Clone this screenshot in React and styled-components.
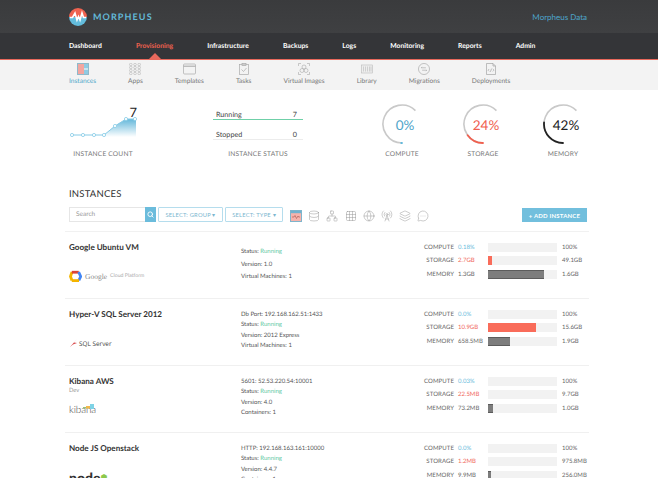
import React from "react";
import styled, { createGlobalStyle } from "styled-components";
import {
  Database,
  Network,
  Grid3x3,
  Globe,
  RadioTower,
  Layers,
  MessageCircleMore,
  Search
} from "lucide-react";

const GlobalStyle = createGlobalStyle`
  html, body {
    margin: 0;
    height: 478px;
    overflow: hidden;
    background: #fff;
    font-family: "Lato", "Open Sans", sans-serif;
    color: #4a4a4a;
    text-rendering: geometricPrecision;
  }
`;

const Brand = styled.div`
  height: 33px;
  padding: 0 71px 0 69px;
  display: flex;
  align-items: center;
  justify-content: space-between;
  background: linear-gradient(#3a3b3d, #3f4042);
`;

const LogoWrap = styled.div`
  display: flex;
  align-items: center;
  gap: 6px;
`;

const LogoText = styled.span`
  font-size: 9px;
  font-weight: 700;
  letter-spacing: 1.1px;
  color: #63b9d8;
`;

const Account = styled.span`
  font-size: 8px;
  color: #4ea6cc;
`;

const MainNav = styled.nav`
  height: 26px;
  padding-left: 69px;
  display: flex;
  align-items: center;
  gap: 34px;
  background: #343538;
  border-bottom: 1px solid #e8695c;
`;

const NavItem = styled.a`
  position: relative;
  font-size: 6.8px;
  font-weight: 700;
  color: ${props => (props.$active ? "#f0614f" : "#fff")};
  &::after {
    content: "";
    display: ${props => (props.$active ? "block" : "none")};
    position: absolute;
    left: 50%;
    bottom: -9px;
    margin-left: -6px;
    border-left: 6px solid transparent;
    border-right: 6px solid transparent;
    border-bottom: 6px solid #e8695c;
  }
`;

const SubNav = styled.nav`
  height: 30px;
  padding-left: 69px;
  display: flex;
  gap: 32px;
  background: #f3f3f3;
`;

const SubItem = styled.a`
  display: flex;
  flex-direction: column;
  align-items: center;
  padding-top: 3px;
  font-size: 6.6px;
  line-height: 9px;
  color: ${props => (props.$active ? "#4da7c9" : "#777")};
  svg {
    display: block;
    height: 12px;
    margin-bottom: 2px;
  }
`;

const Stats = styled.section`
  display: grid;
  grid-template-columns: 144px 169px 81px 80px 81px;
  padding: 14px 0 0 69px;
  height: 86px;
  box-sizing: border-box;
`;

const Stat = styled.div`
  display: flex;
  flex-direction: column;
  align-items: center;
  width: ${props => props.$width}px;
`;

const StatBody = styled.div`
  position: relative;
  height: 42px;
  width: 100%;
`;

const StatLabel = styled.span`
  margin-top: 4px;
  font-size: 6.6px;
  line-height: 9px;
  letter-spacing: 0.2px;
  color: #777;
  white-space: nowrap;
`;

const CountValue = styled.span`
  position: absolute;
  right: 0;
  top: 2px;
  font-size: 13px;
  line-height: 13px;
  color: #222;
`;

const StatusRow = styled.div`
  height: 9px;
  margin-top: ${props => props.$top}px;
  padding: 0 6px 0 3px;
  display: flex;
  align-items: center;
  justify-content: space-between;
  font-size: 7.2px;
  color: #444;
  border-bottom: 1px solid ${props => props.$line};
`;

const GaugeValue = styled.span`
  position: absolute;
  left: 6px;
  right: 0;
  top: 13px;
  text-align: center;
  font-size: 13.5px;
  line-height: 16px;
  white-space: nowrap;
  color: ${props => props.$color};
`;

const Content = styled.main`
  padding: 0 71px 0 69px;
`;

const Heading = styled.h2`
  margin: 12px 0 0;
  height: 19px;
  font-size: 9.5px;
  line-height: 14px;
  font-weight: 400;
  letter-spacing: 0.2px;
  color: #333;
`;

const Toolbar = styled.div`
  height: 24px;
  display: flex;
  align-items: flex-start;
  border-bottom: 1px solid #f1f1f1;
  margin: 0 -2px 0 -4px;
  padding: 0 2px 0 4px;
`;

const SearchBox = styled.div`
  width: 76px;
  height: 15px;
  box-sizing: border-box;
  padding-left: 6px;
  display: flex;
  align-items: center;
  font-size: 6.5px;
  color: #999;
  border: 1px solid #e6e6e6;
  border-right: 0;
`;

const SearchButton = styled.button`
  width: 11px;
  height: 15px;
  padding: 0;
  border: 0;
  display: flex;
  align-items: center;
  justify-content: center;
  background: #6bbcdc;
  color: #fff;
`;

const SelectButton = styled.button`
  width: ${props => props.$width}px;
  height: 15px;
  margin-left: ${props => props.$gap}px;
  padding: 0;
  font: inherit;
  font-size: 5.8px;
  letter-spacing: 0.2px;
  color: #7bb6cf;
  background: #fff;
  border: 1px solid #b5dded;
  border-radius: 1px;
`;

const Icons = styled.div`
  margin: 3px 0 0 7px;
  display: flex;
  gap: 6.2px;
  color: #999;
`;

const AddButton = styled.button`
  margin-left: auto;
  margin-top: 1px;
  width: 65px;
  height: 14px;
  padding: 0;
  border: 0;
  font: inherit;
  font-size: 6px;
  font-weight: 700;
  letter-spacing: 0.2px;
  color: #fff;
  background: #72bfdd;
`;

const Row = styled.article`
  height: 55px;
  display: flex;
  margin: 0 -2px 0 -4px;
  padding: 11px 2px 0 4px;
  border-bottom: 1px solid #f0f0f0;
`;

const Identity = styled.div`
  flex: none;
  width: 172px;
`;

const Title = styled.h3`
  margin: 0;
  font-size: 8.1px;
  line-height: 9px;
  font-weight: 700;
  color: #333;
`;

const Sub = styled.div`
  height: 9px;
  font-size: 5.8px;
  line-height: 9px;
  color: #999;
`;

const LogoSlot = styled.div`
  position: relative;
  height: 20px;
  margin-top: 5px;
  display: flex;
  align-items: center;
  gap: ${props => props.$gap || 0}px;
  color: #666;
`;

const Details = styled.div`
  flex: none;
  width: 165px;
  padding-top: ${props => (props.$roomy ? "3px" : "0")};
  font-size: 6px;
  line-height: ${props => (props.$roomy ? "12.6px" : "10.3px")};
  color: #555;
`;

const Running = styled.span`
  color: #5fc8a2;
`;

const Metrics = styled.div`
  flex: none;
  width: 181px;
  display: flex;
  flex-direction: column;
  gap: 4.4px;
`;

const MetricRow = styled.div`
  display: flex;
  align-items: center;
  height: 9px;
  font-size: 6px;
  color: #666;
`;

const MetricName = styled.span`
  width: 48px;
  text-align: right;
  letter-spacing: 0.1px;
  color: #666;
`;

const MetricUsed = styled.span`
  width: 30px;
  margin-left: 4px;
  color: ${props => props.$color};
`;

const Bar = styled.div`
  width: 69px;
  height: 9px;
  background: #f2f2f2;
`;

const BarFill = styled.div`
  height: 100%;
  box-sizing: border-box;
  background: ${props => props.$color};
  border-top: ${props => (props.$dark ? "1px solid #5c5c5c" : "0")};
  border-bottom: ${props => (props.$dark ? "1px solid #5c5c5c" : "0")};
`;

const MetricTotal = styled.span`
  margin-left: 5px;
`;

const GoogleText = styled.span`
  font-family: "Liberation Serif", serif;
  font-size: 7.5px;
  color: #8a8a8a;
`;

const GoogleSmall = styled.span`
  font-size: 5.2px;
  color: #aaa;
`;

const SqlText = styled.span`
  font-family: "Open Sans", sans-serif;
  font-size: 6.4px;
  color: #444;
`;

const KibanaText = styled.span`
  font-size: 10px;
  font-weight: 300;
  letter-spacing: -0.1px;
  color: #444;
`;

const KibanaBlocks = styled.svg`
  position: absolute;
  left: 14px;
  top: 4px;
`;

const NodeText = styled.span`
  font-size: 14px;
  font-weight: 900;
  color: #333;
`;

const NodeDot = styled.span`
  font-size: 8px;
  color: #8cc84b;
`;

const MorpheusMark = () => (
  <svg width="18" height="18" viewBox="0 0 18 18">
    <path d="M0 9a9 9 0 0 1 18 0z" fill="#ef6350" />
    <path d="M0 9a9 9 0 0 0 18 0z" fill="#63bcdc" />
    <path
      d="M1 9.5h2.5L6 5l2 7 1.5-3.5L11 12l2-7 1.5 4.5H17"
      fill="none"
      stroke="#fff"
      strokeWidth="1.6"
    />
  </svg>
);

const InstancesIcon = () => (
  <svg width="12" height="12" viewBox="0 0 12 12">
    <rect x="0.5" y="0.5" width="11" height="11" fill="#fff" stroke="#8fb9ca" />
    <rect x="1" y="1" width="6" height="10" fill="#f3a6a0" />
    <rect x="7" y="1" width="4" height="4.5" fill="#8fcbe3" />
    <rect x="7" y="6.5" width="4" height="4.5" fill="#8fcbe3" />
  </svg>
);

const AppsIcon = () => (
  <svg width="12" height="12" viewBox="0 0 12 12" fill="none" stroke="#aaa" strokeWidth="0.5">
    {[1.5, 4.5, 7.5, 10.5].map(y =>
      [1.8, 6, 10.2].map(x => <circle key={`${x}-${y}`} cx={x} cy={y} r="1.3" />)
    )}
  </svg>
);

const TemplatesIcon = () => (
  <svg width="13" height="12" viewBox="0 0 13 12" fill="none" stroke="#aaa" strokeWidth="0.7">
    <rect x="0.5" y="1" width="12" height="10" rx="1" />
    <path d="M0.5 3.2h12" strokeWidth="1.1" />
  </svg>
);

const TasksIcon = () => (
  <svg width="10" height="12" viewBox="0 0 10 12" fill="none" stroke="#aaa" strokeWidth="0.7">
    <rect x="0.5" y="1.5" width="9" height="10" />
    <rect x="3" y="0.5" width="4" height="2" fill="#ccc" />
    <path d="M2.5 6.5l2 2 3-3.5" />
  </svg>
);

const VirtualIcon = () => (
  <svg width="12" height="12" viewBox="0 0 12 12" fill="none" stroke="#aaa" strokeWidth="0.6">
    <path d="M0.5 3V.5H3M9 .5h2.5V3M.5 9v2.5H3M9 11.5h2.5V9" />
    <circle cx="6" cy="4" r="2" />
    <circle cx="4" cy="7.5" r="2" />
    <circle cx="8" cy="7.5" r="2" />
  </svg>
);

const LibraryIcon = () => (
  <svg width="12" height="12" viewBox="0 0 12 12" fill="none" stroke="#bbb" strokeWidth="0.6">
    <rect x="0.5" y="2" width="11" height="8" fill="#eee" />
    <path d="M2.5 3.5v5M4.5 3.5v5M6.5 3.5v5M8.5 3.5v5M10 3.5v5" />
  </svg>
);

const MigrationsIcon = () => (
  <svg width="12" height="12" viewBox="0 0 13 13" fill="none" stroke="#999" strokeWidth="0.6">
    <circle cx="6.5" cy="6.5" r="6" />
    <path d="M3.5 5.2h5M3.5 5.2l1-1M9.5 7.8h-5M9.5 7.8l-1 1" />
  </svg>
);

const DeployIcon = () => (
  <svg width="10" height="12" viewBox="0 0 10 12" fill="none" stroke="#999" strokeWidth="0.6">
    <path d="M.5.5H7L9.5 3v8.5h-9zM7 .5V3h2.5" />
    <path d="M3.2 6L2 7.2l1.2 1.2M6.8 6L8 7.2 6.8 8.4M5.6 5.6L4.4 8.8" />
  </svg>
);

const Sparkline = () => (
  <svg width="68" height="42" viewBox="0 0 68 42">
    <defs>
      <linearGradient id="spark" x1="0" y1="0" x2="0" y2="1">
        <stop offset="0" stopColor="#63b7da" />
        <stop offset="1" stopColor="#fff" />
      </linearGradient>
    </defs>
    <path d="M35 31L46 22 57 15 67 15V33H35z" fill="url(#spark)" />
    <polyline
      points="3,31 14,31 25,31 35,31 46,22 57,15 67,15"
      fill="none"
      stroke="#86cbe6"
      strokeWidth="1"
    />
    {[[3, 31], [14, 31], [25, 31], [35, 31], [46, 22], [57, 15], [66, 15]].map(([x, y]) => (
      <circle key={x} cx={x} cy={y} r="1.6" fill="#fff" stroke="#86cbe6" strokeWidth="0.8" />
    ))}
  </svg>
);

// 225deg track running from the bottom clockwise to the upper right
const polar = (deg, r = 19) => {
  const a = ((deg - 90) * Math.PI) / 180;
  return [20 + r * Math.cos(a), 20 + r * Math.sin(a)];
};

const arc = (from, to) => {
  const [x1, y1] = polar(from);
  const [x2, y2] = polar(to);
  return `M${x1} ${y1}A19 19 0 ${to - from > 180 ? 1 : 0} 1 ${x2} ${y2}`;
};

const Gauge = ({ value, color }) => (
  <svg width="40" height="40" viewBox="0 0 40 40" fill="none">
    <path d={arc(180, 405)} stroke="#c9c9c9" strokeWidth="1.6" />
    <path
      d={arc(180, 180 + Math.max(value, 1) * 2.25)}
      stroke={color}
      strokeWidth="1.8"
      strokeLinecap="round"
    />
  </svg>
);

const CalendarIcon = () => (
  <svg width="12" height="12" viewBox="0 0 12 12">
    <rect x="0.5" y="0.5" width="11" height="11" fill="#f6b3ac" stroke="#7fb4cb" />
    <rect x="1" y="1" width="10" height="2.2" fill="#6fb2cf" />
    <path d="M2 7h2l1-1.5L6.5 8.5 8 6l.7 1H10" fill="none" stroke="#a5554f" strokeWidth="0.6" />
  </svg>
);

const GoogleLogo = () => (
  <LogoSlot $gap={3}>
    <svg width="13" height="13" viewBox="0 0 14 14" fill="none" strokeWidth="3">
      <path d="M3.2 2.2L1.6 7l1.6 4.2" stroke="#f4b400" />
      <path d="M3 2.4h7.5" stroke="#db4437" />
      <path d="M10.4 2.2L12.6 7l-2 4.2" stroke="#4285f4" />
      <path d="M3 11.4h7.8" stroke="#f4b400" />
    </svg>
    <GoogleText>Google</GoogleText>
    <GoogleSmall>Cloud Platform</GoogleSmall>
  </LogoSlot>
);

const SqlLogo = () => (
  <LogoSlot $gap={1}>
    <svg width="9" height="11" viewBox="0 0 9 11">
      <path d="M1 9L8 1 5 4.5l3 .6-4 1.4z" fill="#d8474a" />
    </svg>
    <SqlText>SQL Server</SqlText>
  </LogoSlot>
);

const KibanaLogo = () => (
  <LogoSlot>
    <KibanaText>kibana</KibanaText>
    <KibanaBlocks width="12" height="7" viewBox="0 0 12 7">
      <rect x="0" y="3" width="4" height="1.5" fill="#9ac27a" />
      <rect x="3" y="2" width="4" height="2.5" fill="#f2b84b" />
      <rect x="7" y="0" width="4" height="5" fill="#7fd3e6" />
    </KibanaBlocks>
  </LogoSlot>
);

const NodeLogo = () => (
  <LogoSlot>
    <NodeText>node</NodeText>
    <NodeDot>⬢</NodeDot>
  </LogoSlot>
);

const navItems = ["Dashboard", "Provisioning", "Infrastructure", "Backups", "Logs", "Monitoring", "Reports", "Admin"];

const subItems = [
  ["Instances", InstancesIcon],
  ["Apps", AppsIcon],
  ["Templates", TemplatesIcon],
  ["Tasks", TasksIcon],
  ["Virtual Images", VirtualIcon],
  ["Library", LibraryIcon],
  ["Migrations", MigrationsIcon],
  ["Deployments", DeployIcon]
];

const instances = [
  {
    name: "Google Ubuntu VM",
    logo: GoogleLogo,
    roomy: true,
    details: [["Status"], "Version: 1.0", "Virtual Machines: 1"],
    compute: "0.18%",
    storage: ["2.7GB", "49.1GB", 5.5],
    memory: ["1.3GB", "1.6GB", 81]
  },
  {
    name: "Hyper-V SQL Server 2012",
    logo: SqlLogo,
    details: ["Db Port: 192.168.162.51:1433", ["Status"], "Version: 2012 Express", "Virtual Machines: 1"],
    compute: "0.0%",
    storage: ["10.9GB", "15.6GB", 70],
    memory: ["658.5MB", "1.9GB", 32]
  },
  {
    name: "Kibana AWS",
    sub: "Dev",
    logo: KibanaLogo,
    details: ["5601: 52.53.220.54:10001", ["Status"], "Version: 4.0", "Containers: 1"],
    compute: "0.03%",
    storage: ["22.5MB", "9.7GB", 0],
    memory: ["73.2MB", "1.0GB", 7]
  },
  {
    name: "Node JS Openstack",
    logo: NodeLogo,
    details: ["HTTP: 192.168.163.161:10000", ["Status"], "Version: 4.4.7", "Containers: 1"],
    compute: "0.0%",
    storage: ["1.2MB", "975.8MB", 0],
    memory: ["9.9MB", "256.0MB", 4]
  }
];

const Metric = ({ name, used, total, pct, usedColor, barColor, dark }) => (
  <MetricRow>
    <MetricName>{name}</MetricName>
    <MetricUsed $color={usedColor}>{used}</MetricUsed>
    <Bar>
      <BarFill $color={barColor} $dark={dark} style={{ width: `${pct}%` }} />
    </Bar>
    <MetricTotal>{total}</MetricTotal>
  </MetricRow>
);

const Instance = ({ name, sub, logo: Logo, roomy, details, compute, storage, memory }) => (
  <Row>
    <Identity>
      <Title>{name}</Title>
      <Sub>{sub}</Sub>
      <Logo />
    </Identity>
    <Details $roomy={roomy}>
      {details.map((line, i) => (
        <div key={i}>
          {Array.isArray(line) ? (
            <>
              Status: <Running>Running</Running>
            </>
          ) : (
            line
          )}
        </div>
      ))}
    </Details>
    <Metrics>
      <Metric name="COMPUTE" used={compute} total="100%" pct={0} usedColor="#6bbcdc" barColor="#6bbcdc" />
      <Metric name="STORAGE" used={storage[0]} total={storage[1]} pct={storage[2]} usedColor="#f0675a" barColor="#f96c5a" />
      <Metric name="MEMORY" used={memory[0]} total={memory[1]} pct={memory[2]} usedColor="#666" barColor="#7d7d7d" dark />
    </Metrics>
  </Row>
);

const App = () => (
  <>
    <GlobalStyle />
    <header>
      <Brand>
        <LogoWrap>
          <MorpheusMark />
          <LogoText>MORPHEUS</LogoText>
        </LogoWrap>
        <Account>Morpheus Data</Account>
      </Brand>
      <MainNav>
        {navItems.map(item => (
          <NavItem key={item} $active={item === "Provisioning"}>
            {item}
          </NavItem>
        ))}
      </MainNav>
      <SubNav>
        {subItems.map(([label, Icon]) => (
          <SubItem key={label} $active={label === "Instances"}>
            <Icon />
            {label}
          </SubItem>
        ))}
      </SubNav>
    </header>
    <Stats>
      <Stat $width={68}>
        <StatBody>
          <Sparkline />
          <CountValue>7</CountValue>
        </StatBody>
        <StatLabel>INSTANCE COUNT</StatLabel>
      </Stat>
      <Stat $width={90}>
        <StatBody>
          <StatusRow $line="#6fd0a8" $top={6}>
            <span>Running</span>
            <span>7</span>
          </StatusRow>
          <StatusRow $line="#ececec" $top={10}>
            <span>Stopped</span>
            <span>0</span>
          </StatusRow>
        </StatBody>
        <StatLabel>INSTANCE STATUS</StatLabel>
      </Stat>
      <Stat $width={40}>
        <StatBody>
          <Gauge value={0} color="#63b9dc" />
          <GaugeValue $color="#4da3c9">0%</GaugeValue>
        </StatBody>
        <StatLabel>COMPUTE</StatLabel>
      </Stat>
      <Stat $width={40}>
        <StatBody>
          <Gauge value={24} color="#f0604f" />
          <GaugeValue $color="#f0604f">24%</GaugeValue>
        </StatBody>
        <StatLabel>STORAGE</StatLabel>
      </Stat>
      <Stat $width={40}>
        <StatBody>
          <Gauge value={42} color="#222" />
          <GaugeValue $color="#222">42%</GaugeValue>
        </StatBody>
        <StatLabel>MEMORY</StatLabel>
      </Stat>
    </Stats>
    <Content>
      <Heading>INSTANCES</Heading>
      <Toolbar>
        <SearchBox>Search</SearchBox>
        <SearchButton>
          <Search size={7} strokeWidth={3} />
        </SearchButton>
        <SelectButton $width={65} $gap={2}>SELECT: GROUP ▾</SelectButton>
        <SelectButton $width={58} $gap={2}>SELECT: TYPE ▾</SelectButton>
        <Icons>
          <CalendarIcon />
          <Database size={12} strokeWidth={1} />
          <Network size={12} strokeWidth={1} />
          <Grid3x3 size={12} strokeWidth={1} />
          <Globe size={12} strokeWidth={1} />
          <RadioTower size={12} strokeWidth={1} />
          <Layers size={12} strokeWidth={1} />
          <MessageCircleMore size={12} strokeWidth={1} />
        </Icons>
        <AddButton>+ ADD INSTANCE</AddButton>
      </Toolbar>
      {instances.map(instance => (
        <Instance key={instance.name} {...instance} />
      ))}
    </Content>
  </>
);

export default App;
